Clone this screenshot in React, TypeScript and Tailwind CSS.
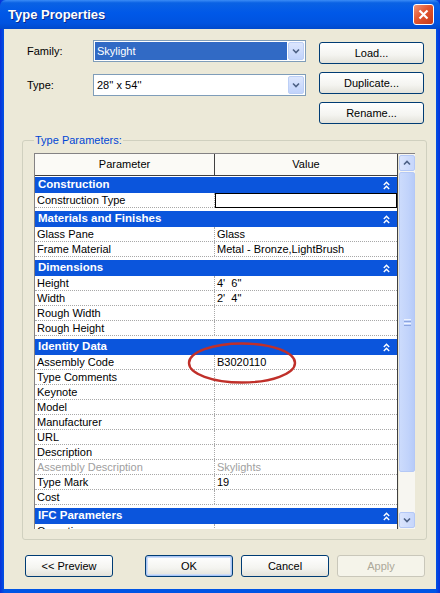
import React from "react";

type Row = { name: string; value?: string; edit?: boolean; dim?: boolean };
type Section = { title: string; rows: Row[]; first?: boolean };

const sections: Section[] = [
  { title: "Construction", first: true, rows: [{ name: "Construction Type", edit: true }] },
  {
    title: "Materials and Finishes",
    rows: [
      { name: "Glass Pane", value: "Glass" },
      { name: "Frame Material", value: "Metal - Bronze,LightBrush" },
    ],
  },
  {
    title: "Dimensions",
    rows: [
      { name: "Height", value: "4'  6\"" },
      { name: "Width", value: "2'  4\"" },
      { name: "Rough Width" },
      { name: "Rough Height" },
    ],
  },
  {
    title: "Identity Data",
    rows: [
      { name: "Assembly Code", value: "B3020110" },
      { name: "Type Comments" },
      { name: "Keynote" },
      { name: "Model" },
      { name: "Manufacturer" },
      { name: "URL" },
      { name: "Description" },
      { name: "Assembly Description", value: "Skylights", dim: true },
      { name: "Type Mark", value: "19" },
      { name: "Cost" },
    ],
  },
  { title: "IFC Parameters", rows: [{ name: "Operation" }] },
];

function XpButton({
  children,
  width = "w-[105px]",
  primary,
  disabled,
}: {
  children: React.ReactNode;
  width?: string;
  primary?: boolean;
  disabled?: boolean;
}) {
  if (disabled) {
    return (
      <div
        className={`${width} h-[22px] rounded-[3px] border border-[#c9c7ba] bg-[#f5f4ea] flex items-center justify-center text-[11px] text-[#aca899]`}
      >
        {children}
      </div>
    );
  }
  return (
    <div
      className={`${width} h-[22px] rounded-[3px] border border-[#003c74] bg-[linear-gradient(to_bottom,#ffffff_0%,#f4f4f0_60%,#e3e2da_100%)] flex items-center justify-center text-[11px] text-black ${
        primary ? "shadow-[inset_0_0_0_1px_#a9c6f5,inset_0_0_0_2px_#cddcf7]" : ""
      }`}
    >
      {children}
    </div>
  );
}

function ComboArrow() {
  return (
    <div className="w-[16px] h-full rounded-[2px] border border-[#bccff6] bg-[linear-gradient(to_bottom,#dce6fd_0%,#c1d3fb_100%)] flex items-center justify-center">
      <svg width="8" height="6" viewBox="0 0 8 6">
        <path d="M1 1.5 L4 4.5 L7 1.5" fill="none" stroke="#4d6185" strokeWidth="1.6" />
      </svg>
    </div>
  );
}

function DoubleUp() {
  return (
    <svg width="7" height="9" viewBox="0 0 7 9">
      <path d="M0.8 4 L3.5 1.3 L6.2 4" fill="none" stroke="white" strokeWidth="1.4" />
      <path d="M0.8 8 L3.5 5.3 L6.2 8" fill="none" stroke="white" strokeWidth="1.4" />
    </svg>
  );
}

function ScrollArrow({ up }: { up?: boolean }) {
  return (
    <div className="h-[16px] rounded-[2px] border border-[#b4c8f6] bg-[linear-gradient(to_right,#dbe5fd_0%,#c6d6fb_100%)] flex items-center justify-center">
      <svg width="8" height="6" viewBox="0 0 8 6">
        <path
          d={up ? "M1 4.5 L4 1.5 L7 4.5" : "M1 1.5 L4 4.5 L7 1.5"}
          fill="none"
          stroke="#4d6185"
          strokeWidth="1.6"
        />
      </svg>
    </div>
  );
}

export default function App() {
  return (
    <div className="w-[440px] h-[593px] flex flex-col bg-[linear-gradient(to_right,#0831d9_0%,#0055e5_1%,#0055e5_99%,#0831d9_100%)] font-['Liberation_Sans',Arial,sans-serif] select-none">
      {/* title bar */}
      <div className="h-[29px] shrink-0 rounded-t-[6px] bg-[linear-gradient(to_bottom,#3b8cf6_0%,#0a62e4_10%,#0058e8_45%,#0053e0_80%,#0049cc_100%)] flex items-center justify-between pl-[8px] pr-[6px]">
        <span className="text-white font-bold text-[13px] [text-shadow:1px_1px_0_#0a2a8a]">Type Properties</span>
        <div className="w-[21px] h-[21px] rounded-[3px] border border-white bg-[linear-gradient(135deg,#f0957a_0%,#e2552f_45%,#c63a1a_100%)] flex items-center justify-center">
          <svg width="11" height="11" viewBox="0 0 11 11">
            <path d="M1.5 1.5 L9.5 9.5 M9.5 1.5 L1.5 9.5" stroke="white" strokeWidth="2.2" />
          </svg>
        </div>
      </div>

      {/* body */}
      <div className="flex-1 mx-[4px] mb-[5px] bg-[#ece9d8] pt-[11px] pb-[12px] flex flex-col">
        {/* family / type */}
        <div className="flex pl-[23px] h-[84px]">
          <div className="flex flex-col gap-[12px]">
            <div className="flex items-center">
              <span className="w-[66px] text-[11px] text-black">Family:</span>
              <div className="w-[213px] h-[22px] border border-[#7f9db9] bg-white flex p-[1px] gap-[1px]">
                <div className="flex-1 bg-[#316ac5] text-white text-[11px] flex items-center pl-[2px]">Skylight</div>
                <ComboArrow />
              </div>
            </div>
            <div className="flex items-center">
              <span className="w-[66px] text-[11px] text-black">Type:</span>
              <div className="w-[213px] h-[22px] border border-[#7f9db9] bg-white flex p-[1px] gap-[1px]">
                <div className="flex-1 text-black text-[11px] flex items-center pl-[2px]">28'' x 54''</div>
                <ComboArrow />
              </div>
            </div>
          </div>
          <div className="ml-[13px] mt-[2px] flex flex-col gap-[8px]">
            <XpButton>Load...</XpButton>
            <XpButton>Duplicate...</XpButton>
            <XpButton>Rename...</XpButton>
          </div>
        </div>

        {/* type parameters group */}
        <fieldset className="mt-[10px] ml-[18px] w-[404px] border border-[#d0d0bf] rounded-[3px] px-[11px] pt-[6px] pb-[10px]">
          <legend className="px-px text-[11px] leading-[13px] text-[#0046d5]">Type Parameters:</legend>
          <div className="h-[376px] flex border-t border-l border-[#848284] bg-[#ece9d8]">
            <div className="relative w-[363px] h-full overflow-hidden bg-white border-r border-[#404040] flex flex-col text-[11px] text-black">
              <div className="h-[22px] shrink-0 flex bg-[#fbfaf6] border-b border-[#404040]">
                <div className="w-[180px] border-r border-[#404040] flex items-center justify-center">Parameter</div>
                <div className="flex-1 flex items-center justify-center">Value</div>
              </div>
              {sections.map((s) => (
                <div key={s.title} className="flex flex-col">
                  <div className={`${s.first ? "h-[17px] pt-[1px]" : "h-[19px] pt-[3px]"} shrink-0 bg-white`}>
                    <div className="h-[16px] bg-[#0b55dc] flex items-center justify-between pl-[3px] pr-[7px]">
                      <span className="text-white font-bold text-[11.5px]">{s.title}</span>
                      <DoubleUp />
                    </div>
                  </div>
                  {s.rows.map((r) => (
                    <div key={r.name} className="h-[15px] shrink-0 flex border-b border-dotted border-[#a8a8a8]">
                      <div
                        className={`w-[180px] shrink-0 border-r border-dotted border-[#a8a8a8] pl-[2px] leading-[14px] whitespace-nowrap ${
                          r.dim ? "text-[#a0a0a0]" : ""
                        }`}
                      >
                        {r.name}
                      </div>
                      {r.edit ? (
                        <div className="flex-1 border border-black -mb-[1px]" />
                      ) : (
                        <div className={`flex-1 pl-[2px] leading-[14px] whitespace-pre ${r.dim ? "text-[#a0a0a0]" : ""}`}>
                          {r.value ?? ""}
                        </div>
                      )}
                    </div>
                  ))}
                </div>
              ))}
              {/* red annotation ring */}
              <svg className="absolute left-[151px] top-[187px]" width="112" height="44" viewBox="0 0 112 44">
                <ellipse cx="56" cy="22" rx="53" ry="19.5" fill="none" stroke="#c0302a" strokeWidth="2.4" />
              </svg>
            </div>
            {/* scrollbar */}
            <div className="ml-[1px] w-[16px] h-full flex flex-col bg-[#f7f6f1] pt-[1px] pb-[1px]">
              <ScrollArrow up />
              <div className="mt-[1px] h-[300px] rounded-[2px] border border-[#b4c8f6] bg-[linear-gradient(to_right,#ccdbfc_0%,#c1d3fb_60%,#b7cbf8_100%)] flex items-center justify-center">
                <div className="flex flex-col gap-[1px]">
                  <div className="w-[7px] h-px bg-[#eef3fe]" />
                  <div className="w-[7px] h-px bg-[#8ca5e0]" />
                  <div className="w-[7px] h-px bg-[#eef3fe]" />
                  <div className="w-[7px] h-px bg-[#8ca5e0]" />
                </div>
              </div>
              <div className="flex-1" />
              <ScrollArrow />
            </div>
          </div>
        </fieldset>

        {/* bottom buttons */}
        <div className="mt-[15px] flex pl-[21px]">
          <XpButton width="w-[88px]">&lt;&lt; Preview</XpButton>
          <div className="ml-[32px] flex gap-[8px]">
            <XpButton width="w-[88px]" primary>
              OK
            </XpButton>
            <XpButton width="w-[88px]">Cancel</XpButton>
            <XpButton width="w-[88px]" disabled>
              Apply
            </XpButton>
          </div>
        </div>
      </div>
    </div>
  );
}
